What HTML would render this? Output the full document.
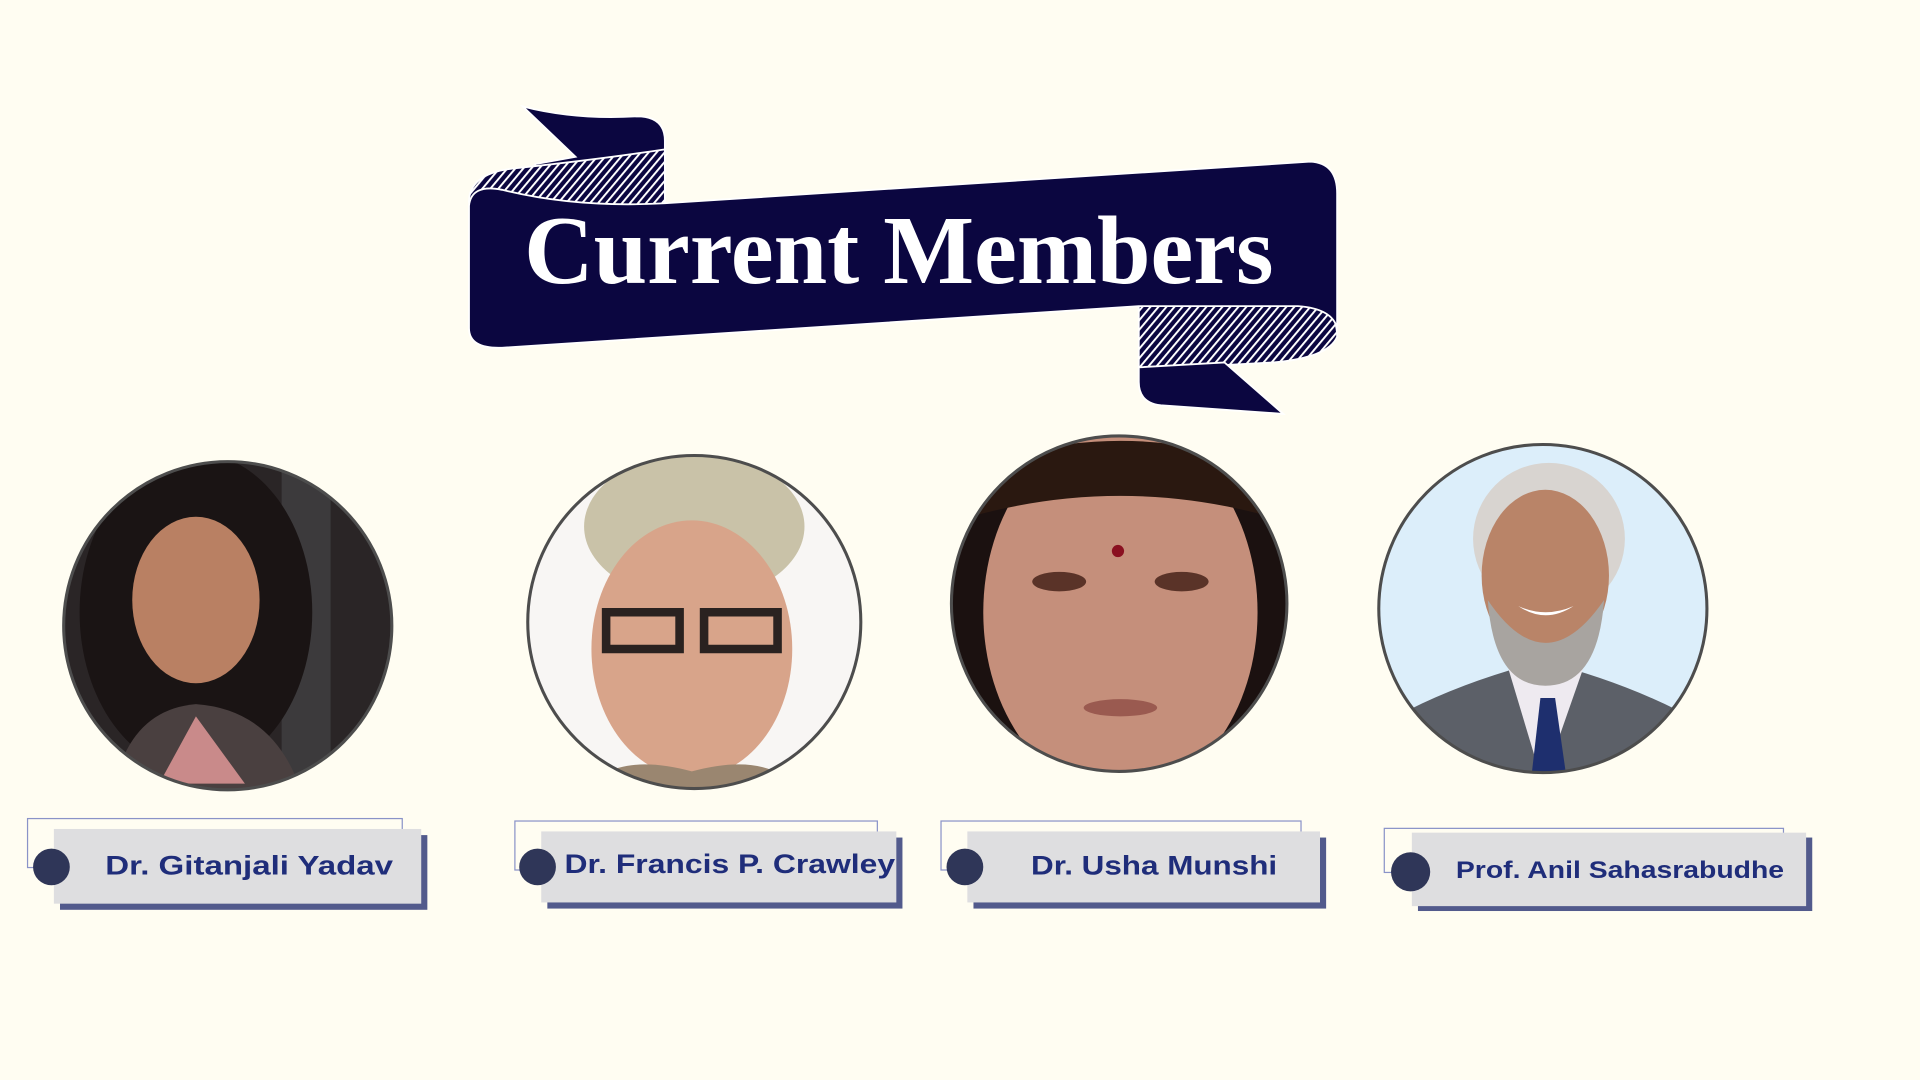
<!DOCTYPE html>
<html><head><meta charset="utf-8"><style>
html,body{margin:0;padding:0;background:#fffdf2;width:1920px;height:1080px;overflow:hidden}
svg{display:block}
</style></head><body>
<svg width="1920" height="1080" viewBox="0 0 1568 882" xmlns="http://www.w3.org/2000/svg">
<defs>
<pattern id="h" width="5" height="5" patternUnits="userSpaceOnUse" patternTransform="rotate(40)">
<rect width="5" height="5" fill="#0b0640"/><rect width="1.6" height="5" fill="#fff"/>
</pattern>
<clipPath id="c1"><circle cx="186" cy="511" r="134"/></clipPath>
<clipPath id="c2"><circle cx="567" cy="508" r="136"/></clipPath>
<clipPath id="c3"><circle cx="914" cy="493" r="137"/></clipPath>
<clipPath id="c4"><circle cx="1260" cy="497" r="134"/></clipPath>
</defs>
<rect width="1568" height="882" fill="#fffdf2"/>
<g stroke="#fff" stroke-width="1.5">
<path d="M427,87 Q470,98 520,95 Q543,95 543,115 L543,170 L440,172 L437,134 L470,128 Z" fill="#0b0640"/>
<path d="M383,165 Q383,140 425,137 Q490,130 543,122 L543,170 L400,175 Z" fill="url(#h)"/>
<path d="M930,250 L1070,244 Q1092,252 1092,275 Q1085,292 1040,296 L930,302 Z" fill="url(#h)"/>
<path d="M930,300 L1000,296 L1048,338 L948,331 Q930,329 930,312 Z" fill="#0b0640"/>
<path d="M383,168 Q385,150 410,155 Q470,170 543,166 L1070,132 Q1092,133 1092,158 L1092,268 Q1088,252 1060,250 L930,250 L410,284 Q383,285 383,268 Z" fill="#0b0640"/>
</g>
<text x="734" y="231" text-anchor="middle" font-family="Liberation Serif, serif" font-weight="bold" font-size="80" fill="#fff" textLength="612" lengthAdjust="spacingAndGlyphs">Current Members</text>

<g clip-path="url(#c1)">
<rect x="40" y="370" width="300" height="290" fill="#2a2526"/>
<rect x="230" y="380" width="40" height="270" fill="#3c3a3c"/>
<ellipse cx="160" cy="500" rx="95" ry="130" fill="#1a1414"/>
<ellipse cx="160" cy="490" rx="52" ry="68" fill="#b98063"/>
<path d="M90,660 Q100,580 160,575 Q230,580 250,660 Z" fill="#4a4040"/>
<path d="M130,640 L160,585 L200,640 Z" fill="#c98a8a"/>
</g>
<circle cx="186" cy="511" r="134" fill="none" stroke="#4d4d4d" stroke-width="2.5"/>
<g clip-path="url(#c2)">
<rect x="420" y="360" width="300" height="300" fill="#f8f6f4"/>
<ellipse cx="567" cy="430" rx="90" ry="60" fill="#c9c2a8"/>
<ellipse cx="565" cy="530" rx="82" ry="105" fill="#d8a48a"/>
<path d="M495,500 h60 v30 h-60z M575,500 h60 v30 h-60z" fill="none" stroke="#2a2220" stroke-width="7"/>
<path d="M470,660 Q490,610 565,630 Q640,610 660,660 Z" fill="#9a8670"/>
</g>
<circle cx="567" cy="508" r="136" fill="none" stroke="#4d4d4d" stroke-width="2.5"/>
<g clip-path="url(#c3)">
<rect x="770" y="350" width="300" height="290" fill="#1b1110"/>
<ellipse cx="915" cy="500" rx="112" ry="150" fill="#c58f7b"/>
<path d="M800,380 Q915,340 1030,380 L1030,420 Q915,390 800,420Z" fill="#2a1810"/>
<ellipse cx="865" cy="475" rx="22" ry="8" fill="#5a3328"/>
<ellipse cx="965" cy="475" rx="22" ry="8" fill="#5a3328"/>
<circle cx="913" cy="450" r="5" fill="#8a1020"/>
<ellipse cx="915" cy="578" rx="30" ry="7" fill="#9a5a50"/>
</g>
<circle cx="914" cy="493" r="137" fill="none" stroke="#4d4d4d" stroke-width="2.5"/>
<g clip-path="url(#c4)">
<rect x="1120" y="360" width="280" height="280" fill="#dceefa"/>
<path d="M1140,640 L1150,580 Q1200,555 1260,540 Q1320,555 1370,580 L1385,640 Z" fill="#5c6068"/>
<path d="M1230,540 L1260,640 L1295,540 Z" fill="#eeeaf0"/>
<path d="M1258,570 L1270,570 L1280,640 L1250,640Z" fill="#1e2f6e"/>
<ellipse cx="1265" cy="440" rx="62" ry="62" fill="#d8d4d0"/>
<ellipse cx="1262" cy="470" rx="52" ry="70" fill="#b98468"/>
<path d="M1215,490 Q1262,560 1310,490 Q1305,560 1262,560 Q1220,560 1215,490Z" fill="#a8a4a0"/>
<path d="M1240,495 Q1262,510 1285,495 Q1262,505 1240,495Z" fill="#fff"/>
</g>
<circle cx="1260" cy="497" r="134" fill="none" stroke="#4d4d4d" stroke-width="2.5"/>

<g font-family="Liberation Sans, sans-serif" font-weight="bold" fill="#1f2d7a">
<rect x="22.5" y="668.5" width="306" height="40" fill="none" stroke="#8a93c8" stroke-width="1"/>
<rect x="49" y="682" width="300" height="61" fill="#525a8c"/>
<rect x="44" y="677" width="300" height="61" fill="#dedee0"/>
<circle cx="42" cy="708" r="15" fill="#2f3658"/>
<text x="86" y="714" font-size="22" fill="#1f2d7a" textLength="235" lengthAdjust="spacingAndGlyphs">Dr. Gitanjali Yadav</text>

<rect x="420.5" y="670.5" width="296" height="40" fill="none" stroke="#8a93c8" stroke-width="1"/>
<rect x="447" y="684" width="290" height="58" fill="#525a8c"/>
<rect x="442" y="679" width="290" height="58" fill="#dedee0"/>
<circle cx="439" cy="708" r="15" fill="#2f3658"/>
<text x="461" y="713" font-size="22" fill="#1f2d7a" textLength="270" lengthAdjust="spacingAndGlyphs">Dr. Francis P. Crawley</text>

<rect x="768.5" y="670.5" width="294" height="40" fill="none" stroke="#8a93c8" stroke-width="1"/>
<rect x="795" y="684" width="288" height="58" fill="#525a8c"/>
<rect x="790" y="679" width="288" height="58" fill="#dedee0"/>
<circle cx="788" cy="708" r="15" fill="#2f3658"/>
<text x="842" y="714" font-size="22" fill="#1f2d7a" textLength="201" lengthAdjust="spacingAndGlyphs">Dr. Usha Munshi</text>

<rect x="1130.5" y="676.5" width="326" height="36" fill="none" stroke="#8a93c8" stroke-width="1"/>
<rect x="1158" y="684" width="322" height="60" fill="#525a8c"/>
<rect x="1153" y="680" width="322" height="60" fill="#dedee0"/>
<circle cx="1152" cy="712" r="16" fill="#2f3658"/>
<text x="1189" y="717" font-size="20" fill="#1f2d7a" textLength="268" lengthAdjust="spacingAndGlyphs">Prof. Anil Sahasrabudhe</text>
</g>
</svg>
</body></html>
